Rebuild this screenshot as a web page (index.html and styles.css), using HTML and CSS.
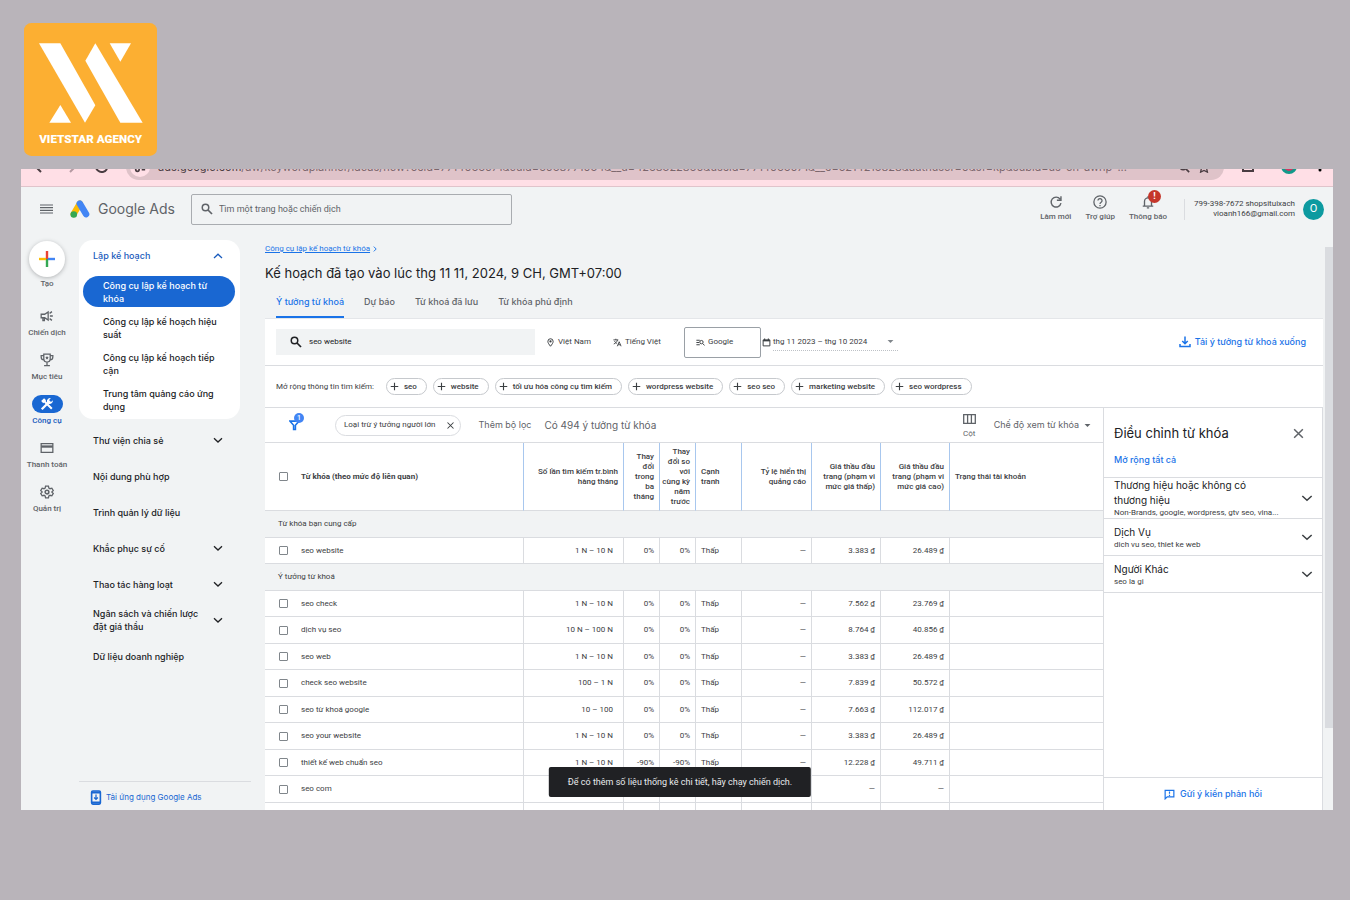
FILE: index.html
```html
<!DOCTYPE html>
<html lang="vi">
<head>
<meta charset="utf-8">
<meta name="viewport" content="width=device-width, initial-scale=1">
<title>Google Ads – Công cụ lập kế hoạch từ khóa</title>
<link rel="stylesheet" href="styles.css">
</head>
<body>
<svg class="defs" aria-hidden="true">
  <symbol id="down" viewBox="0 0 24 24"><path d="M4 8.500l8 7.500 8-7.500" fill="none" stroke="currentColor" stroke-width="2.600"/></symbol>
  <symbol id="up" viewBox="0 0 24 24"><path d="M4 16l8-7.500 8 7.500" fill="none" stroke="currentColor" stroke-width="2.600"/></symbol>
  <symbol id="plus" viewBox="0 0 24 24"><path d="M12 2v20M2 12h20" fill="none" stroke="currentColor" stroke-width="3"/></symbol>
  <symbol id="close" viewBox="0 0 24 24"><path d="M4 4l16 16M20 4L4 20" fill="none" stroke="currentColor" stroke-width="2.800"/></symbol>
  <symbol id="caret" viewBox="0 0 24 24"><path d="M2 7h20L12 17z" fill="currentColor"/></symbol>
  <symbol id="search" viewBox="0 0 24 24"><circle cx="9" cy="9" r="6.500" fill="none" stroke="currentColor" stroke-width="3"/><path d="M14 14l8 8" stroke="currentColor" stroke-width="3.400"/></symbol>
</svg>

<svg class="agency-logo" viewBox="71 68 399 399" role="img" aria-label="Vietstar Agency">
  <rect x="71" y="68" width="399" height="399" rx="22" fill="#fcaf32"/>
  <g fill="#fff">
    <path d="M116 129H180L285 315L254 367Z"/>
    <path d="M285 129L427 367H360L255 181Z"/>
    <path d="M328 129H392L360 184Z"/>
    <path d="M180 314L212 367H147Z"/>
    <text x="271" y="428" text-anchor="middle" class="agency-name">VIETSTAR AGENCY</text>
  </g>
</svg>

<div class="window">
  <div class="browser">
    <svg class="b-back" viewBox="0 0 14 14"><path d="M8 1L2 7l6 6M2 7h11" fill="none" stroke="currentColor" stroke-width="2"/></svg>
    <svg class="b-fwd" viewBox="0 0 14 14"><path d="M6 1l6 6-6 6M1 7h11" fill="none" stroke="currentColor" stroke-width="2"/></svg>
    <svg class="b-reload" viewBox="0 0 14 14"><path d="M12 4a6 6 0 1 0 0 6" fill="none" stroke="currentColor" stroke-width="2"/></svg>
    <div class="omnibox">
      <span class="site"><svg viewBox="0 0 14 14"><path d="M1 4h6M9 10h4" stroke="currentColor" stroke-width="2"/><circle cx="10" cy="4" r="2" fill="none" stroke="currentColor" stroke-width="2"/><circle cx="4" cy="10" r="2" fill="none" stroke="currentColor" stroke-width="2"/></svg></span>
      <span class="url"><b>ads.google.com</b>/aw/keywordplanner/ideas/new?ocid=7714066071&amp;euid=5068771054&amp;__u=4268322860&amp;uscid=7714066071&amp;__c=5214215828&amp;authuser=0&amp;sf=kp&amp;subid=us-en-awhp-...</span>
      <svg viewBox="0 0 14 14"><circle cx="6" cy="6" r="4" fill="none" stroke="currentColor" stroke-width="2"/><path d="M9 9l4 4" stroke="currentColor" stroke-width="2"/></svg>
      <svg viewBox="0 0 14 14"><path d="M7 1l2 4 4 .500-3 3 1 4.500-4-2-4 2 1-4.500-3-3 4-.500z" fill="none" stroke="currentColor" stroke-width="1.500"/></svg>
    </div>
    <svg class="b-ext" viewBox="0 0 14 14"><path d="M2 3h10v10H2z" fill="none" stroke="currentColor" stroke-width="2"/></svg>
    <span class="b-avatar"></span>
    <svg class="b-more" viewBox="0 0 14 14"><circle cx="7" cy="2" r="1.500"/><circle cx="7" cy="7" r="1.500"/><circle cx="7" cy="12" r="1.500"/></svg>
  </div>

  <header class="topbar">
    <button class="menu" aria-label="Menu"><svg viewBox="0 0 13 10"><path d="M0 1h13M0 3.700h13M0 6.300h13M0 9h13" stroke="currentColor" stroke-width="1.200"/></svg></button>
    <a class="brand" href="#">
      <svg viewBox="210 601 61 55"><path d="M240 612L221 644" stroke="#fbbc04" stroke-width="19" stroke-linecap="round"/><path d="M240 612L259 644" stroke="#4285f4" stroke-width="20" stroke-linecap="round"/><circle cx="221.500" cy="645" r="10" fill="#34a853"/></svg>
      <span>Google Ads</span>
    </a>
    <label class="global-search"><svg><use href="#search"/></svg><input type="text" aria-label="Tìm kiếm" placeholder="Tìm một trang hoặc chiến dịch"></label>
    <div class="actions">
      <button class="action"><svg viewBox="0 0 24 24"><path d="M19 7a8.500 8.500 0 1 0 1.500 7M20.500 2v7h-7" fill="none" stroke="currentColor" stroke-width="2.400"/></svg>Làm mới</button>
      <button class="action"><svg viewBox="0 0 24 24"><circle cx="12" cy="12" r="10.500" fill="none" stroke="currentColor" stroke-width="2.200"/><path d="M8.500 9.500a3.500 3.500 0 1 1 5.500 3c-1.500 1-2 1.500-2 3M12 17v2.400" fill="none" stroke="currentColor" stroke-width="2.200"/></svg>Trợ giúp</button>
      <button class="action"><span class="bell"><svg viewBox="0 0 24 24"><path d="M3 19h18M6 19v-8a6 6 0 0 1 12 0v8M12 2v3M10 22h4" fill="none" stroke="currentColor" stroke-width="2.300"/></svg><i>!</i></span>Thông báo</button>
    </div>
    <div class="account"><span>799-398-7672 shopsituixach<br>vioanh166@gmail.com</span><button class="avatar">O</button></div>
  </header>

  <div class="shell">
    <nav class="rail" aria-label="Chính">
      <button class="create"><span><svg viewBox="0 0 16 16"><path d="M8 0v8" stroke="#ea4335" stroke-width="2.400"/><path d="M8 8v8" stroke="#34a853" stroke-width="2.400"/><path d="M0 8h7" stroke="#fbbc04" stroke-width="2.400"/><path d="M9 8h7" stroke="#4285f4" stroke-width="2.400"/></svg></span>Tạo</button>
      <a href="#"><span><svg viewBox="0 0 24 24"><path d="M2 9h6l6-4v14l-6-4H2zM5 15v5h2.500v-5M17 12h5M16.500 7.500l4-3M16.500 16.500l4 3" fill="none" stroke="currentColor" stroke-width="2.200"/></svg></span>Chiến dịch</a>
      <a href="#"><span><svg viewBox="0 0 24 24"><path d="M6.500 2h11v8a5.500 5.500 0 0 1-11 0zM6.500 4.500H2V7c0 3 2 5 5 5M17.500 4.500H22V7c0 3-2 5-5 5M12 15.500V21M7 21.500h10" fill="none" stroke="currentColor" stroke-width="2.200"/><path d="M12 5l1 2 2 .200-1.500 1.500.500 2.300-2-1.200-2 1.200.500-2.300L9 7.200l2-.200z" fill="currentColor"/></svg></span>Mục tiêu</a>
      <a href="#" class="current" aria-current="page"><span><svg viewBox="0 0 24 24"><path d="M3 21L15 9" stroke="currentColor" stroke-width="4"/><path d="M14 3a5.500 5.500 0 0 1 4.500-1l-3 3.200 3.300 3.300L22 5.500a5.500 5.500 0 0 1-7.500 6L12 9a5.500 5.500 0 0 1 2-6z" fill="currentColor"/><path d="M2 7l5-5 3.500 3.500-1 1.500L21.500 19 19 21.500 7 9.500 5.500 10.500 4 9z" fill="currentColor"/></svg></span>Công cụ</a>
      <a href="#"><span><svg viewBox="0 0 24 24"><path d="M2 4.500h20v15H2z" fill="none" stroke="currentColor" stroke-width="2.200"/><path d="M2 9.500h20" stroke="currentColor" stroke-width="4"/></svg></span>Thanh toán</a>
      <a href="#"><span><svg viewBox="0 0 24 24"><path d="M9.500 2h5l.700 3.200 2 1.200 3.100-1 2.500 4.200-2.400 2.200v.400l2.400 2.200-2.500 4.200-3.100-1-2 1.200-.700 3.200h-5l-.700-3.200-2-1.200-3.100 1-2.500-4.200 2.400-2.200v-.400L1.200 9.600l2.500-4.200 3.100 1 2-1.200z" fill="none" stroke="currentColor" stroke-width="2.200"/><circle cx="12" cy="12" r="3.200" fill="none" stroke="currentColor" stroke-width="2.600"/></svg></span>Quản trị</a>
    </nav>

    <nav class="sidenav" aria-label="Công cụ">
      <div class="group">
        <button class="group-head">Lập kế hoạch<svg><use href="#up"/></svg></button>
        <a href="#" class="selected">Công cụ lập kế hoạch từ khóa</a>
        <a href="#">Công cụ lập kế hoạch hiệu suất</a>
        <a href="#">Công cụ lập kế hoạch tiếp cận</a>
        <a href="#">Trung tâm quảng cáo ứng dụng</a>
      </div>
      <button class="entry">Thư viện chia sẻ<svg><use href="#down"/></svg></button>
      <a class="entry" href="#">Nội dung phù hợp</a>
      <a class="entry" href="#">Trình quản lý dữ liệu</a>
      <button class="entry">Khắc phục sự cố<svg><use href="#down"/></svg></button>
      <button class="entry">Thao tác hàng loạt<svg><use href="#down"/></svg></button>
      <button class="entry"><span>Ngân sách và chiến lược đặt giá thầu</span><svg><use href="#down"/></svg></button>
      <a class="entry" href="#">Dữ liệu doanh nghiệp</a>
      <a class="app-link" href="#"><svg viewBox="0 0 18 24"><rect x="2" y="1.500" width="14" height="21" rx="2" fill="none" stroke="currentColor" stroke-width="2.600"/><path d="M2 4h14M2 20h14" stroke="currentColor" stroke-width="3"/><path d="M9 7v8M6 12l3 3 3-3" fill="none" stroke="currentColor" stroke-width="2"/></svg>Tải ứng dụng Google Ads</a>
    </nav>

    <main class="main">
      <div class="intro">
        <a class="crumb" href="#"><u>Công cụ lập kế hoạch từ khóa</u><svg viewBox="0 0 6 10"><path d="M1 1l4 4-4 4" fill="none" stroke="currentColor" stroke-width="1.600"/></svg></a>
        <h1>Kế hoạch đã tạo vào lúc thg 11 11, 2024, 9 CH, GMT+07:00</h1>
        <div class="tabs" role="tablist">
          <button role="tab" aria-selected="true">Ý tưởng từ khoá</button>
          <button role="tab" aria-selected="false">Dự báo</button>
          <button role="tab" aria-selected="false">Từ khoá đã lưu</button>
          <button role="tab" aria-selected="false">Từ khóa phủ định</button>
        </div>
      </div>

      <div class="query">
        <label class="seed"><svg><use href="#search"/></svg><input type="text" aria-label="Từ khóa" value="seo website"></label>
        <button class="place"><svg viewBox="0 0 24 24"><path d="M12 22C8 17 5 13 5 9a7 7 0 0 1 14 0c0 4-3 8-7 13z" fill="none" stroke="currentColor" stroke-width="2.600"/><circle cx="12" cy="9" r="3" fill="currentColor"/></svg>Việt Nam</button>
        <button class="lang"><svg viewBox="0 0 24 24"><path d="M1 5h13M7.500 2v3M12 5c-1 5-5 9-10 11M4 8c1 3 4 5 7 7M11.500 22l5-12 5 12M13.500 18h6" fill="none" stroke="currentColor" stroke-width="2.400"/></svg>Tiếng Việt</button>
        <button class="network"><svg viewBox="0 0 24 24"><path d="M1 6h9M1 12h7M1 18h9M18 15l5 5" stroke="currentColor" stroke-width="2.600"/><circle cx="14.500" cy="11" r="4.500" fill="none" stroke="currentColor" stroke-width="2.600"/></svg>Google</button>
        <svg class="cal" viewBox="0 0 24 24"><path d="M3 5h18v16H3z" fill="none" stroke="currentColor" stroke-width="2.600"/><path d="M3 7h18" stroke="currentColor" stroke-width="4"/><path d="M7 1v4M17 1v4" stroke="currentColor" stroke-width="3"/></svg>
        <button class="dates">thg 11 2023 – thg 10 2024<svg><use href="#caret"/></svg></button>
        <a class="download" href="#"><svg viewBox="0 0 24 24"><path d="M12 1v14M6.500 10l5.500 5.500 5.500-5.500M2 16v5h20v-5" fill="none" stroke="currentColor" stroke-width="3"/></svg>Tải ý tưởng từ khoá xuống</a>
      </div>

      <div class="broaden">
        <span>Mở rộng thông tin tìm kiếm:</span>
        <button><svg><use href="#plus"/></svg>seo</button>
        <button><svg><use href="#plus"/></svg>website</button>
        <button><svg><use href="#plus"/></svg>tối ưu hóa công cụ tìm kiếm</button>
        <button><svg><use href="#plus"/></svg>wordpress website</button>
        <button><svg><use href="#plus"/></svg>seo seo</button>
        <button><svg><use href="#plus"/></svg>marketing website</button>
        <button><svg><use href="#plus"/></svg>seo wordpress</button>
      </div>

      <div class="results">
        <section class="ideas">
          <div class="toolbar">
            <button class="filter" aria-label="Bộ lọc"><svg viewBox="0 0 24 24"><path d="M2 3.500h20l-8 9V22h-4v-9.500z" fill="none" stroke="currentColor" stroke-width="3.400"/></svg><i>1</i></button>
            <button class="filter-chip">Loại trừ ý tưởng người lớn<svg><use href="#close"/></svg></button>
            <button class="add-filter">Thêm bộ lọc</button>
            <span class="count">Có 494 ý tưởng từ khóa</span>
            <button class="columns"><svg viewBox="0 0 13 10"><path d="M.700.700h11.600v8.600H.700zM4.600.700v8.600M8.400.700v8.600" fill="none" stroke="currentColor" stroke-width="1.300"/></svg>Cột</button>
            <button class="view">Chế độ xem từ khóa<svg><use href="#caret"/></svg></button>
          </div>
          <table>
            <colgroup><col class="c-key"><col class="c-vol"><col class="c-pct"><col class="c-pct"><col class="c-comp"><col class="c-share"><col class="c-bid"><col class="c-bid"><col></colgroup>
            <thead>
              <tr>
                <th class="key"><label><input type="checkbox"><b>Từ khóa (theo mức độ liên quan)</b></label></th>
                <th>Số lần tìm kiếm tr.bình hàng tháng</th>
                <th>Thay đổi trong ba tháng</th>
                <th>Thay đổi so với cùng kỳ năm trước</th>
                <th class="left">Cạnh tranh</th>
                <th>Tỷ lệ hiển thị quảng cáo</th>
                <th>Giá thầu đầu trang (phạm vi mức giá thấp)</th>
                <th>Giá thầu đầu trang (phạm vi mức giá cao)</th>
                <th class="left">Trạng thái tài khoản</th>
              </tr>
            </thead>
            <tbody>
              <tr class="section"><td colspan="9">Từ khóa bạn cung cấp</td></tr>
              <tr><td class="key"><label><input type="checkbox">seo website</label></td><td class="vol">1 N – 10 N</td><td>0%</td><td>0%</td><td class="left">Thấp</td><td>—</td><td>3.383 ₫</td><td>26.489 ₫</td><td></td></tr>
              <tr class="section"><td colspan="9">Ý tưởng từ khoá</td></tr>
              <tr><td class="key"><label><input type="checkbox">seo check</label></td><td class="vol">1 N – 10 N</td><td>0%</td><td>0%</td><td class="left">Thấp</td><td>—</td><td>7.562 ₫</td><td>23.769 ₫</td><td></td></tr>
              <tr><td class="key"><label><input type="checkbox">dịch vụ seo</label></td><td class="vol">10 N – 100 N</td><td>0%</td><td>0%</td><td class="left">Thấp</td><td>—</td><td>8.764 ₫</td><td>40.856 ₫</td><td></td></tr>
              <tr><td class="key"><label><input type="checkbox">seo web</label></td><td class="vol">1 N – 10 N</td><td>0%</td><td>0%</td><td class="left">Thấp</td><td>—</td><td>3.383 ₫</td><td>26.489 ₫</td><td></td></tr>
              <tr><td class="key"><label><input type="checkbox">check seo website</label></td><td class="vol">100 – 1 N</td><td>0%</td><td>0%</td><td class="left">Thấp</td><td>—</td><td>7.839 ₫</td><td>50.572 ₫</td><td></td></tr>
              <tr><td class="key"><label><input type="checkbox">seo từ khoá google</label></td><td class="vol">10 – 100</td><td>0%</td><td>0%</td><td class="left">Thấp</td><td>—</td><td>7.663 ₫</td><td>112.017 ₫</td><td></td></tr>
              <tr><td class="key"><label><input type="checkbox">seo your website</label></td><td class="vol">1 N – 10 N</td><td>0%</td><td>0%</td><td class="left">Thấp</td><td>—</td><td>3.383 ₫</td><td>26.489 ₫</td><td></td></tr>
              <tr><td class="key"><label><input type="checkbox">thiết kế web chuẩn seo</label></td><td class="vol">1 N – 10 N</td><td>-90%</td><td>-90%</td><td class="left">Thấp</td><td>—</td><td>12.228 ₫</td><td>49.711 ₫</td><td></td></tr>
              <tr><td class="key"><label><input type="checkbox">seo com</label></td><td></td><td></td><td></td><td></td><td></td><td>—</td><td>—</td><td></td></tr>
              <tr><td></td><td></td><td></td><td></td><td></td><td></td><td></td><td></td><td></td></tr>
            </tbody>
          </table>
        </section>

        <aside class="refine">
          <div class="refine-head"><h2>Điều chỉnh từ khóa</h2><button aria-label="Đóng"><svg><use href="#close"/></svg></button></div>
          <a class="expand-all" href="#">Mở rộng tất cả</a>
          <button class="facet"><span><strong>Thương hiệu hoặc không có thương hiệu</strong><small>Non-Brands, google, wordpress, gtv seo, vina...</small></span><svg><use href="#down"/></svg></button>
          <button class="facet"><span><strong>Dịch Vụ</strong><small>dich vu seo, thiet ke web</small></span><svg><use href="#down"/></svg></button>
          <button class="facet"><span><strong>Người Khác</strong><small>seo la gi</small></span><svg><use href="#down"/></svg></button>
          <a class="feedback" href="#"><svg viewBox="0 0 24 24"><path d="M2.500 3h19v14H7l-4.500 4.500z" fill="none" stroke="currentColor" stroke-width="2.600"/><path d="M12 5.500v5M12 12.500v2.500" stroke="currentColor" stroke-width="2.600"/></svg>Gửi ý kiến phản hồi</a>
        </aside>
      </div>
    </main>
    <div class="scroll"><span></span></div>
  </div>
  <div class="toast" role="status">Để có thêm số liệu thống kê chi tiết, hãy chạy chiến dịch.</div>
</div>
</body>
</html>
```

FILE: styles.css
```css
:root {
  --text: Roboto, "Noto Sans", sans-serif;
  --display: Inter, "Noto Sans", sans-serif;
  --ink: #3c4043;
  --mute: #5f6368;
  --blue: #1a73e8;
  --line: #dadce0;
  --wash: #f1f3f4;
}
* { box-sizing: border-box; }
body {
  margin: 0;
  height: 100vh;
  padding: 23px 17px 90px 21px;
  display: flex;
  flex-direction: column;
  background: #b9b4ba;
  color: var(--ink);
  font: 8px/12px var(--text);
}
button, input { font: inherit; color: inherit; border: 0; background: none; padding: 0; margin: 0; }
button { cursor: pointer; }
input[type="text"] { outline: 0; min-width: 0; flex: 1; }
a { color: inherit; text-decoration: none; }
svg { flex: none; display: block; }
.defs { position: absolute; width: 0; height: 0; }

.agency-logo { width: 133px; height: 133px; margin: 0 0 13px 3px; }
.agency-name { font: 900 35px Roboto, sans-serif; }

.window {
  position: relative;
  flex: 1;
  min-height: 0;
  display: flex;
  flex-direction: column;
  overflow: hidden;
  background: var(--wash);
}

/* Browser chrome: only its lower edge stays in view */
.browser {
  height: 18px;
  flex: none;
  display: flex;
  align-items: flex-end;
  padding: 0 6px 6px 12px;
  background: #ffdfe6;
  border-bottom: 1px solid #e0c4cb;
  overflow: hidden;
  color: #4a3d42;
}
.browser > svg { width: 14px; height: 14px; margin: 0 17px 7px 0; }
.browser .b-fwd { color: #b59aa2; }
.omnibox {
  flex: 1;
  min-width: 0;
  height: 26px;
  display: flex;
  align-items: center;
  gap: 8px;
  padding: 0 14px 0 4px;
  border-radius: 13px;
  background: #dfc3c9;
}
.omnibox svg { width: 12px; height: 12px; }
.site { width: 20px; height: 20px; border-radius: 50%; background: #ffdfe6; display: grid; place-items: center; }
.url { flex: 1; min-width: 0; overflow: hidden; white-space: nowrap; font: 11px/20px var(--display); color: #7a666c; }
.url b { font-weight: 400; color: #4a3d42; }
.browser .b-ext { margin: 0 26px 8px 17px; }
.b-avatar { width: 16px; height: 16px; margin: 0 16px 6px 0; border-radius: 50%; border: 3px solid #12998a; background: #d8345f; }
.browser .b-more { margin: 0 0 8px; }

.topbar { height: 46px; flex: none; display: flex; align-items: center; padding: 0 9px 2px 19px; }
.menu svg { width: 13px; height: 10px; }
.menu { color: var(--mute); margin-right: 17px; }
.brand { display: flex; align-items: center; gap: 8px; width: 121px; font: 14px/20px var(--display); color: var(--mute); }
.brand svg { width: 20px; height: 18px; }
.global-search {
  width: 321px;
  height: 31px;
  display: flex;
  align-items: center;
  gap: 6px;
  padding: 0 9px;
  border: 1px solid #a9acb0;
  border-radius: 2px;
  font-size: 9px;
  color: var(--mute);
}
.global-search svg { width: 12px; height: 12px; }
.global-search input::placeholder { color: var(--mute); opacity: 1; }
.actions { margin-left: auto; display: flex; gap: 14px; margin-right: 17px; padding-bottom: 3px; }
.action { display: flex; flex-direction: column; align-items: center; gap: 3px; font-weight: 500; line-height: 9px; color: var(--mute); }
.action svg { width: 14px; height: 14px; }
.bell { position: relative; }
.bell i { position: absolute; left: 7px; top: -5px; width: 13px; height: 13px; border-radius: 50%; background: #c5362b; color: #fff; font: 700 9px/13px var(--text); text-align: center; }
.account { display: flex; align-items: center; gap: 8px; padding-left: 9px; border-left: 1px solid var(--line); text-align: right; line-height: 10px; }
.avatar { width: 21px; height: 21px; border-radius: 50%; background: #0d9aa0; color: #fff; font-size: 11px; }

.shell { flex: 1; min-height: 0; display: flex; }

.rail { width: 52px; flex: none; display: flex; flex-direction: column; align-items: center; padding-top: 8px; line-height: 9px; font-weight: 500; color: var(--mute); }
.create { display: flex; flex-direction: column; align-items: center; gap: 2px; margin-bottom: 19px; }
.create span { width: 36px; height: 36px; border-radius: 50%; background: #fff; box-shadow: 0 1px 4px rgba(60, 64, 67, .35); display: grid; place-items: center; }
.create svg { width: 16px; height: 16px; }
.rail a { height: 44px; display: flex; flex-direction: column; align-items: center; gap: 3px; white-space: nowrap; }
.rail a span { width: 31px; height: 18px; border-radius: 9px; display: grid; place-items: center; }
.rail a svg { width: 14px; height: 14px; }
.rail .current { color: #185abc; }
.rail .current span { background: #1967d2; color: #fff; }

.sidenav { width: 178px; flex: none; display: flex; flex-direction: column; padding: 7px 0 0 6px; font: 500 9px/13px var(--display); color: #202124; }
.group { width: 161px; padding: 0 5px 4px 4px; margin-bottom: 3px; border-radius: 14px; background: #fff; display: flex; flex-direction: column; gap: 5px; }
.group-head { height: 31px; display: flex; align-items: center; justify-content: space-between; padding: 0 11px 0 10px; color: #185abc; }
.group a { min-height: 31px; display: flex; align-items: center; padding: 2px 12px 2px 20px; border-radius: 16px; }
.group .selected { background: #1967d2; color: #fff; }
.sidenav svg { width: 12px; height: 12px; }
.entry { width: 161px; min-height: 36px; display: flex; align-items: center; justify-content: space-between; gap: 6px; padding: 0 16px 0 14px; text-align: left; }
.sidenav .app-link { margin-top: auto; height: 29px; border-top: 1px solid var(--line); display: flex; align-items: center; gap: 4px; padding: 3px 0 0 11px; font-weight: 400; font-size: 8px; color: #1967d2; }
.sidenav .app-link svg { width: 12px; height: 15px; }

.main { flex: 1; min-width: 0; display: flex; flex-direction: column; padding-left: 14px; }
.intro { padding-top: 10px; border-bottom: 1px solid #e4e6e9; }
.crumb { display: flex; align-items: center; gap: 3px; color: var(--blue); }
.crumb svg { width: 4px; height: 6px; }
h1 { margin: 8px 0; font: 400 13px/20px var(--display); color: #202124; }
.tabs { display: flex; gap: 20px; padding-left: 11px; }
.tabs button { height: 27px; padding-bottom: 4px; border-bottom: 2px solid transparent; font: 500 9px/12px var(--display); color: var(--mute); white-space: nowrap; }
.tabs [aria-selected="true"] { color: var(--blue); border-color: var(--blue); }

.query { min-height: 47px; flex: none; display: flex; align-items: center; padding: 0 17px 0 11px; background: #fff; border-bottom: 1px solid var(--line); white-space: nowrap; }
.query button, .query a { display: flex; align-items: center; gap: 3px; }
.query svg { width: 9px; height: 9px; }
.seed { width: 259px; height: 26px; display: flex; align-items: center; gap: 7px; padding: 0 14px; margin-right: 11px; background: var(--wash); color: #202124; }
.query .seed svg { width: 12px; height: 12px; }
.place { width: 67px; }
.lang { width: 71px; }
.query .network { width: 77px; height: 31px; padding-left: 11px; border: 1px solid #9aa0a6; border-radius: 2px; margin-right: 1px; }
.query .dates { width: 125px; height: 17px; justify-content: space-between; padding-right: 4px; margin-left: 2px; border-bottom: 1px dotted #bdc1c6; }
.query .dates svg { width: 7px; height: 7px; color: #80868b; }
.query .download { margin-left: auto; gap: 4px; color: var(--blue); font: 500 9px/12px var(--display); }
.query .download svg { width: 12px; height: 12px; }

.broaden { min-height: 42px; flex: none; display: flex; align-items: center; gap: 6px; padding-left: 11px; background: #fff; border-bottom: 1px solid var(--line); white-space: nowrap; }
.broaden span { margin-right: 6px; }
.broaden button { height: 17px; display: flex; align-items: center; gap: 5px; padding: 0 9px 0 3px; border: 1px solid #c6c9cd; border-radius: 9px; font-weight: 500; }
.broaden svg { width: 9px; height: 9px; }

.results { flex: 1; min-height: 0; display: flex; background: #fff; }
.ideas { flex: 1; min-width: 0; overflow: hidden; }
.toolbar { height: 35px; display: flex; align-items: center; padding: 0 12px 0 24px; border-bottom: 1px solid var(--line); white-space: nowrap; color: var(--mute); }
.filter { position: relative; color: var(--blue); margin-right: 35px; }
.filter svg { width: 11px; height: 12px; }
.filter i { position: absolute; left: 5px; top: -6px; width: 10px; height: 10px; border-radius: 50%; background: #4285f4; color: #fff; font: 500 7px/10px var(--text); }
.filter-chip { height: 21px; display: flex; align-items: center; gap: 10px; padding: 0 5px 0 8px; margin-right: 18px; border: 1px solid var(--line); border-radius: 11px; color: var(--ink); }
.filter-chip svg { width: 9px; height: 9px; }
.add-filter { margin-right: 13px; font: 9px/12px var(--display); }
.count { font: 10px/12px var(--display); }
.columns { margin: 0 18px 0 auto; display: flex; flex-direction: column; align-items: center; gap: 4px; padding-top: 4px; }
.columns svg { width: 13px; height: 10px; }
.view { display: flex; align-items: center; gap: 5px; font: 9px/12px var(--display); }
.view svg { width: 7px; height: 7px; }

table { width: 100%; table-layout: fixed; border-collapse: separate; border-spacing: 0; line-height: 10px; }
.c-key { width: 259px; }
.c-vol { width: 100px; }
.c-pct { width: 36px; }
.c-comp { width: 46px; }
.c-share { width: 70px; }
.c-bid { width: 69px; }
th, td { padding: 0 5px; text-align: right; border-bottom: 1px solid var(--line); border-right: 1px solid var(--line); }
th { height: 68px; padding-left: 2px; font-weight: 500; border-right-color: #a8c7ee; }
th.left { padding-left: 5px; }
th:last-child, td:last-child { border-right: 0; }
td { height: 26px; }
tbody tr:nth-child(odd) td { height: 27px; }
.left, .key { text-align: left; }
td.vol { padding-right: 10px; }
.section td { background: var(--wash); text-align: left; padding-left: 13px; }
th.key, td.key { padding-left: 14px; }
.key label { display: flex; align-items: center; gap: 13px; }
input[type="checkbox"] { appearance: none; width: 9px; height: 9px; border: 1px solid #80868b; border-radius: 1px; background: #fff; }

.refine { width: 220px; flex: none; display: flex; flex-direction: column; border-left: 1px solid var(--line); border-right: 1px solid var(--line); }
.refine-head { display: flex; align-items: center; justify-content: space-between; padding: 16px 17px 0 10px; }
h2 { margin: 0; font: 400 13px/18px var(--display); color: #202124; }
.refine-head svg { width: 13px; height: 13px; }
.refine-head button { color: var(--mute); }
.expand-all { padding: 12px 10px 11px; font: 500 9px/12px var(--display); color: var(--blue); border-bottom: 1px solid var(--line); }
.facet { min-height: 37px; display: flex; align-items: center; justify-content: space-between; padding: 0 8px 0 10px; text-align: left; border-bottom: 1px solid var(--line); }
.facet span { width: 160px; }
.facet strong, .facet small { display: block; }
.facet strong { font: 400 10px/15px var(--display); color: #202124; }
.facet small { font-size: 8px; line-height: 10px; white-space: nowrap; }
.facet svg { width: 14px; height: 14px; }
.feedback { margin-top: auto; height: 33px; display: flex; align-items: center; justify-content: center; gap: 5px; border-top: 1px solid var(--line); color: var(--blue); font: 500 9px/12px var(--display); }
.feedback svg { width: 11px; height: 11px; }

.scroll { width: 10px; flex: none; padding: 14px 0 82px 2px; background: #f1f3f4; display: flex; }
.scroll span { flex: 1; background: #dadce0; }

.toast { position: absolute; left: 50%; bottom: 13px; transform: translateX(-50%); margin-left: 3px; padding: 9px 19px; border-radius: 2px; background: #202124; color: #e8eaed; font-size: 9px; white-space: nowrap; }
```
